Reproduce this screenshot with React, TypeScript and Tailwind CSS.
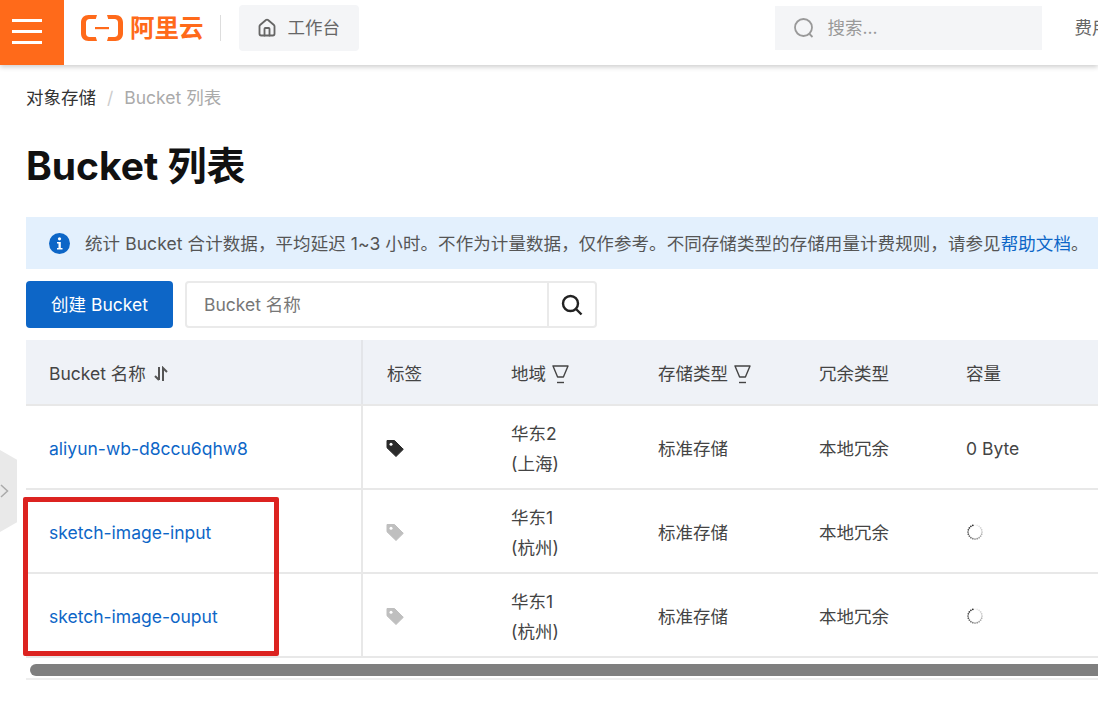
import { House } from "lucide-react";

const rows = [
  { name: "aliyun-wb-d8ccu6qhw8", region: "华东2", city: "(上海)", active: true, size: "0 Byte" },
  { name: "sketch-image-input", region: "华东1", city: "(杭州)", active: false, size: "" },
  { name: "sketch-image-ouput", region: "华东1", city: "(杭州)", active: false, size: "" },
];

const cols = "grid grid-cols-[337px_124px_147px_161px_147px_1fr]";

function Logo() {
  const half = "M16 0H7.500C3 0 0 3 0 7.500V18.500C0 23 3 26 7.500 26H16L14.800 22H8.500C6.500 22 5 20.500 5 18.500V7.500C5 5.500 6.500 4 8.500 4H14.800Z";
  return (
    <svg width="42" height="26" viewBox="0 0 42 26" fill="#ff6a1a" className="shrink-0">
      <path d={half} />
      <path d={half} transform="matrix(-1 0 0 1 42 0)" />
      <rect x="14" y="12" width="14" height="2.200" />
    </svg>
  );
}

function TagIcon({ color }: { color: string }) {
  return (
    <svg width="18" height="18" viewBox="0 0 18 18">
      <path d="M1 1.500h7.500L17.300 10.300 10 17.500 1 8.800z" fill={color} stroke={color} strokeLinejoin="round" />
      <circle cx="5" cy="5.300" r="1.500" fill="white" />
    </svg>
  );
}

function FilterIcon() {
  return (
    <svg width="17" height="20" viewBox="0 0 17 20" fill="none" stroke="#444" strokeWidth="1.400" className="ml-[6px] shrink-0">
      <path d="M1 2h15l-4.600 11H5.600z" strokeLinejoin="round" />
      <path d="M5 18.500h7" />
    </svg>
  );
}

function SortIcon() {
  return (
    <svg width="14" height="16" viewBox="0 0 14 16" fill="none" stroke="#555" strokeWidth="2" className="ml-2 shrink-0">
      <path d="M5 1v13M1 10l4 4" />
      <path d="M9 15V2l4 4" />
    </svg>
  );
}

function SearchGlyph() {
  return (
    <svg width="22" height="22" viewBox="0 0 22 22" fill="none" stroke="#999" strokeWidth="1.800" className="shrink-0">
      <circle cx="10.500" cy="10.500" r="8.500" />
      <path d="M16.500 17l3 3" />
    </svg>
  );
}

function Spinner() {
  const dots = Array.from({ length: 20 }, (_, i) => i);
  return (
    <svg width="18" height="18" viewBox="0 0 18 18">
      {dots.map((i) => {
        const a = (i / 20) * Math.PI * 2;
        return <circle key={i} cx={9 + 7 * Math.sin(a)} cy={9 - 7 * Math.cos(a)} r="0.850" fill="#222" opacity={(i + 1) / 20} />;
      })}
    </svg>
  );
}

export default function App() {
  return (
    <div className="relative w-[1098px] h-[712px] overflow-hidden bg-white font-['Inter','Noto_Sans_CJK_SC',sans-serif] text-[17.5px] text-[#333]">
      <header className="flex items-center h-[65px] bg-white shadow-[0_2px_5px_rgba(0,0,0,0.2)]">
        <div className="flex flex-col justify-center gap-[8px] w-[64px] h-full shrink-0 bg-[#ff6a1a] pl-[12px] pb-[2px]">
          <div className="w-[30px] h-[3px] bg-white" />
          <div className="w-[30px] h-[3px] bg-white" />
          <div className="w-[30px] h-[3px] bg-white" />
        </div>
        <div className="flex items-center h-full pb-[9px] whitespace-nowrap">
          <div className="flex items-center ml-[17px]">
            <Logo />
            <span className="ml-[7px] text-[24.500px] font-bold leading-none text-[#ff6a1a]">阿里云</span>
          </div>
          <div className="w-px h-[26px] shrink-0 bg-[#ddd] ml-[16px]" />
          <div className="flex items-center w-[120px] h-[46px] shrink-0 ml-[18px] rounded-sm bg-[#f4f5f7] pl-[18px] text-[#666]">
            <House size={20} strokeWidth={2.200} />
            <span className="ml-[11px]">工作台</span>
          </div>
          <div className="flex items-center w-[267px] h-[44px] shrink-0 ml-[416px] bg-[#f4f5f7] pl-[18px] text-[#999]">
            <SearchGlyph />
            <span className="ml-[13px]">搜索...</span>
          </div>
          <span className="ml-[33px] shrink-0 text-[#666]">费用</span>
        </div>
      </header>

      <main className="pl-[26px]">
        <nav className="flex items-center h-[26px] mt-[20px]">
          <span>对象存储</span>
          <span className="mx-[11px] text-[#ccc]">/</span>
          <span className="text-[#aaa]">Bucket 列表</span>
        </nav>
        <h1 className="mt-[30px] h-[49px] text-[39px] leading-[49px] font-bold text-[#111]">Bucket 列表</h1>

        <div className="flex items-center h-[52px] mt-[27px] bg-[#e3f0fd] pl-[23px] whitespace-nowrap text-[#555]">
          <svg width="21" height="21" viewBox="0 0 21 21" className="shrink-0">
            <circle cx="10.500" cy="10.500" r="10.500" fill="#0d66c7" />
            <circle cx="10.500" cy="5.800" r="1.600" fill="white" />
            <path d="M8 9h3.800v6H13.500v1.600H8V15h1.500v-4.400H8z" fill="white" />
          </svg>
          <span className="ml-[15px] pt-[2px] tracking-[0.08px]">
            统计 Bucket 合计数据，平均延迟 1~3 小时。不作为计量数据，仅作参考。不同存储类型的存储用量计费规则，请参见
            <span className="text-[#0d66c7]">帮助文档</span>。
          </span>
        </div>

        <div className="flex items-center gap-[12px] mt-[12px]">
          <button className="w-[147px] h-[47px] rounded-sm bg-[#0d66c7] pt-[2px] text-white">创建 Bucket</button>
          <div className="flex w-[412px] h-[47px] rounded-sm border-2 border-[#eaeaea]">
            <div className="flex flex-1 items-center pl-[17px] pt-[2px] text-[#777]">Bucket 名称</div>
            <div className="flex items-center justify-center w-[48px] border-l-2 border-[#eaeaea]">
              <svg width="22" height="22" viewBox="0 0 22 22" fill="none" stroke="#222" strokeWidth="2.400">
                <circle cx="9.500" cy="9.500" r="7.500" />
                <path d="M15 15l5.500 5.500" />
              </svg>
            </div>
          </div>
        </div>

        <div className="mt-[12px]">
          <div className={`${cols} h-[66px] items-stretch bg-[#eff2f7] border-b-2 border-[#e8e8e8] text-[#444]`}>
            <div className="flex items-center pl-[23px] pt-[4px] border-r-2 border-[#e3e5e9]">
              Bucket 名称
              <SortIcon />
            </div>
            <div className="flex items-center pl-[24px] pt-[4px]">标签</div>
            <div className="flex items-center pl-[24px] pt-[4px]">
              地域
              <FilterIcon />
            </div>
            <div className="flex items-center pl-[24px] pt-[4px]">
              存储类型
              <FilterIcon />
            </div>
            <div className="flex items-center pl-[24px] pt-[4px]">冗余类型</div>
            <div className="flex items-center pl-[24px] pt-[4px]">容量</div>
          </div>

          {rows.map((row) => (
            <div key={row.name} className={`${cols} h-[84px] border-b-2 border-[#e8e8e8] text-[#444]`}>
              <div className="flex items-center pl-[23px] pt-[4px] border-r-2 border-[#e8e8e8] text-[#0d66c7]">{row.name}</div>
              <div className="flex items-center pl-[23px] pt-[2px]">
                <TagIcon color={row.active ? "#2b2b2b" : "#bfbfbf"} />
              </div>
              <div className="flex flex-col justify-center pl-[24px] pt-[4px] leading-[30px]">
                <span>{row.region}</span>
                <span>{row.city}</span>
              </div>
              <div className="flex items-center pl-[24px] pt-[4px]">标准存储</div>
              <div className="flex items-center pl-[24px] pt-[4px]">本地冗余</div>
              <div className={`flex items-center pl-[24px] ${row.size ? "pt-[4px]" : "pt-[2px]"}`}>{row.size || <Spinner />}</div>
            </div>
          ))}

          <div className="h-[22px] border-b-2 border-[#eee] pt-[6px] pl-[4px]">
            <div className="h-[12px] rounded-l-full bg-[#7f7f7f]" />
          </div>
        </div>
      </main>

      <div className="absolute left-0 top-[450px] w-[17px] h-[82px] bg-[#e9e9e9] [clip-path:polygon(0_0,100%_12%,100%_88%,0_100%)] flex items-center">
        <svg width="9" height="14" viewBox="0 0 9 14" fill="none" stroke="#aaa" strokeWidth="1.500">
          <path d="M1 1l6.500 6L1 13" />
        </svg>
      </div>
      <div className="absolute left-[23px] top-[497px] w-[256px] h-[159px] rounded-[2px] border-[5px] border-[#dc2320]" />
    </div>
  );
}
